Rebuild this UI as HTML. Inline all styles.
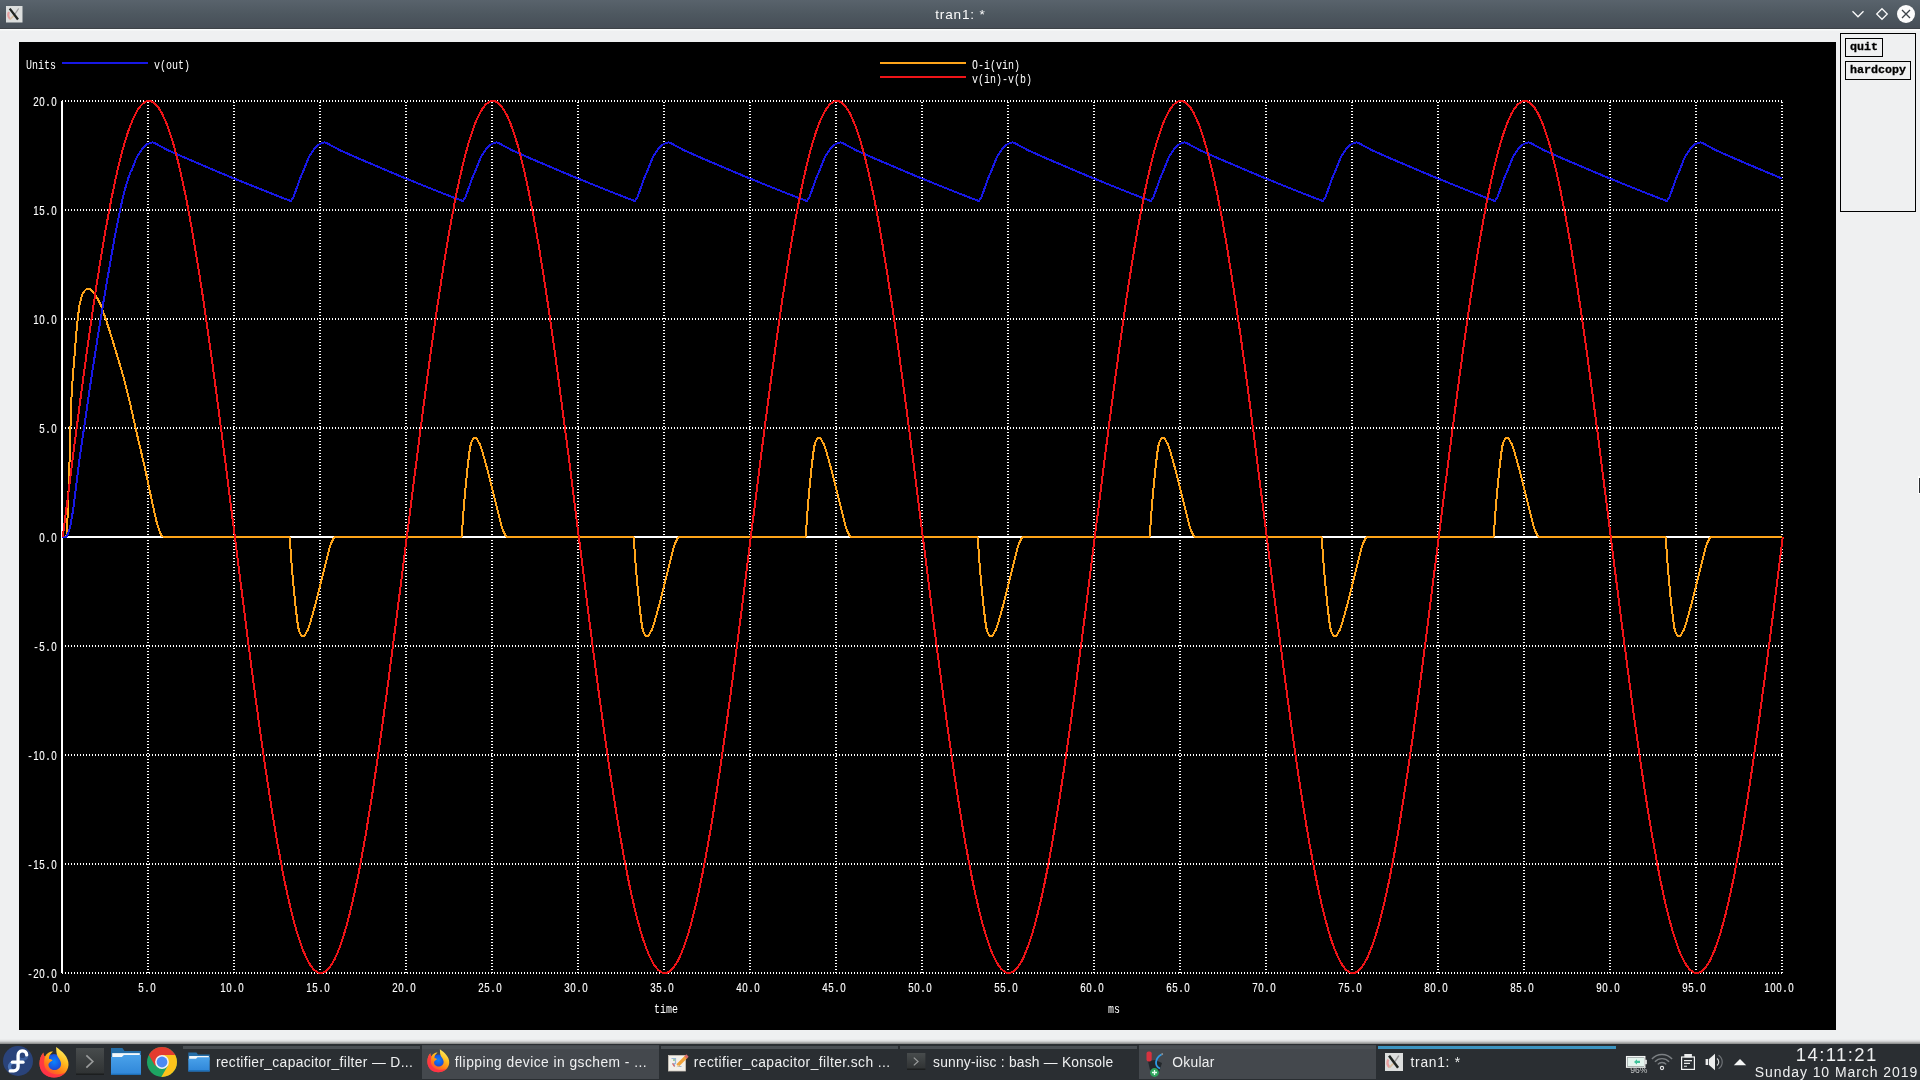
<!DOCTYPE html>
<html><head><meta charset="utf-8"><title>tran1: *</title>
<style>
html,body{margin:0;padding:0;}html{overflow:hidden;width:1920px;height:1080px;}
body{will-change:transform;width:1920px;height:1080px;overflow:hidden;background:#eff0f1;position:relative;font-family:"Liberation Sans",sans-serif;}
.abs{position:absolute;}
#titlebar{left:0;top:0;width:1920px;height:29px;background:linear-gradient(#59636c 0%,#4e5860 50%,#474e57 100%);border-bottom:1px solid #3e4348;box-sizing:border-box;}
#title{left:0;top:1px;width:1920px;height:28px;line-height:28px;text-align:center;color:#fcfcfc;font-size:13.6px;letter-spacing:0.8px;text-indent:0.8px;}
#hl{left:0;top:29px;width:1920px;height:2px;background:linear-gradient(#fbfcfc 0%,#fbfcfc 50%,#eceeee 100%);}
#plot{position:absolute;left:19px;top:42px;}
#panel{left:1840px;top:33px;width:74px;height:177px;border:1px solid #000;}
.btn{-webkit-text-stroke:0.3px #000;border:1px solid #000;font-family:"Liberation Mono",monospace;font-weight:bold;font-size:11.67px;color:#000;box-sizing:border-box;white-space:pre;}
#tshadow{left:0;top:1039px;width:1920px;height:5px;background:linear-gradient(rgba(0,0,0,0),rgba(0,0,0,0.08) 40%,rgba(0,0,0,0.45));}
#taskbar{left:0;top:1044px;width:1920px;height:36px;background:#2a2e32;}
.task{position:absolute;top:1px;height:34px;}
.task .bar{position:absolute;left:0;right:0;top:1px;height:3px;background:#4a4f54;}
.task.hl{background:#44484d;}
.task.act .bar{background:#3b93c0;}
.task .lbl{position:absolute;top:10px;font-size:13.4px;line-height:16px;color:#eff0f1;white-space:pre;transform-origin:0 0;}
#clock1{left:1752px;top:1043.6px;width:168px;text-align:center;color:#eff0f1;font-size:18.5px;line-height:22px;letter-spacing:1.4px;text-indent:1.4px;}
#clock2{left:1752px;top:1063.6px;width:168px;text-align:center;color:#eff0f1;font-size:14px;line-height:17px;letter-spacing:0.93px;text-indent:0.93px;}
</style></head><body>
<div id="titlebar" class="abs"></div>
<div id="title" class="abs">tran1: *</div>
<div id="hl" class="abs"></div>
<!-- window icon -->
<svg class="abs" style="left:6px;top:6px" width="17" height="17" viewBox="0 0 17 17">
<rect x="0" y="0" width="16.5" height="16.5" fill="#dcdedd"/>
<path d="M3 6 Q1 10 4 13" stroke="#e8a0a0" stroke-width="2.2" fill="none"/>
<path d="M4 13.5 Q7 10 9 9" stroke="#d8c0a0" stroke-width="1.5" fill="none"/>
<path d="M12.7 2.5 L9 8" stroke="#9a9a9a" stroke-width="1.3" fill="none"/>
<path d="M3.7 2.6 L12 13.5" stroke="#1e2420" stroke-width="2.3" fill="none"/>
</svg>
<!-- window buttons -->
<svg class="abs" style="left:1846px;top:2px" width="74" height="24" viewBox="1846 2 74 24">
<path d="M1852.5 11.3 L1858 16.8 L1863.5 11.3" stroke="#fcfcfc" stroke-width="1.25" fill="none"/>
<path d="M1882 8.7 L1887.3 14 L1882 19.3 L1876.7 14 Z" stroke="#fcfcfc" stroke-width="1.25" fill="none"/>
<circle cx="1906" cy="14" r="9" fill="#fcfcfc"/>
<path d="M1902 10 L1910 18 M1910 10 L1902 18" stroke="#3b4248" stroke-width="1.3" fill="none"/>
</svg>
<svg id="plot" width="1817" height="988" viewBox="19 42 1817 988">
<rect x="19" y="42" width="1817" height="988" fill="#000"/>
<g stroke="#fff" stroke-width="2" fill="none" shape-rendering="crispEdges">
<line x1="62" y1="973" x2="62" y2="101"/>
<line x1="148" y1="973" x2="148" y2="101" stroke-dasharray="1 2"/>
<line x1="234" y1="973" x2="234" y2="101" stroke-dasharray="1 2"/>
<line x1="320" y1="973" x2="320" y2="101" stroke-dasharray="1 2"/>
<line x1="406" y1="973" x2="406" y2="101" stroke-dasharray="1 2"/>
<line x1="492" y1="973" x2="492" y2="101" stroke-dasharray="1 2"/>
<line x1="578" y1="973" x2="578" y2="101" stroke-dasharray="1 2"/>
<line x1="664" y1="973" x2="664" y2="101" stroke-dasharray="1 2"/>
<line x1="750" y1="973" x2="750" y2="101" stroke-dasharray="1 2"/>
<line x1="836" y1="973" x2="836" y2="101" stroke-dasharray="1 2"/>
<line x1="922" y1="973" x2="922" y2="101" stroke-dasharray="1 2"/>
<line x1="1008" y1="973" x2="1008" y2="101" stroke-dasharray="1 2"/>
<line x1="1094" y1="973" x2="1094" y2="101" stroke-dasharray="1 2"/>
<line x1="1180" y1="973" x2="1180" y2="101" stroke-dasharray="1 2"/>
<line x1="1266" y1="973" x2="1266" y2="101" stroke-dasharray="1 2"/>
<line x1="1352" y1="973" x2="1352" y2="101" stroke-dasharray="1 2"/>
<line x1="1438" y1="973" x2="1438" y2="101" stroke-dasharray="1 2"/>
<line x1="1524" y1="973" x2="1524" y2="101" stroke-dasharray="1 2"/>
<line x1="1610" y1="973" x2="1610" y2="101" stroke-dasharray="1 2"/>
<line x1="1696" y1="973" x2="1696" y2="101" stroke-dasharray="1 2"/>
<line x1="1782" y1="973" x2="1782" y2="101" stroke-dasharray="1 2"/>
<line x1="62" y1="101" x2="1782" y2="101" stroke-dasharray="1 2"/>
<line x1="62" y1="210" x2="1782" y2="210" stroke-dasharray="1 2"/>
<line x1="62" y1="319" x2="1782" y2="319" stroke-dasharray="1 2"/>
<line x1="62" y1="428" x2="1782" y2="428" stroke-dasharray="1 2"/>
<line x1="62" y1="537" x2="1782" y2="537"/>
<line x1="62" y1="646" x2="1782" y2="646" stroke-dasharray="1 2"/>
<line x1="62" y1="755" x2="1782" y2="755" stroke-dasharray="1 2"/>
<line x1="62" y1="864" x2="1782" y2="864" stroke-dasharray="1 2"/>
<line x1="62" y1="973" x2="1782" y2="973" stroke-dasharray="1 2"/>
</g>
<g fill="none" stroke-width="2" stroke-linejoin="round" shape-rendering="crispEdges">
<polyline stroke="#ffa51a" points="62.0,537.0 65.4,537.0 65.8,536.8 66.1,536.2 66.5,535.4 66.8,533.4 67.2,526.8 69.2,471.7 69.9,450.3 70.6,422.5 71.6,394.9 72.0,388.5 72.7,378.5 74.0,362.6 76.1,335.5 77.1,324.9 78.5,312.6 79.5,305.4 80.2,301.8 81.6,296.7 82.3,294.7 83.0,293.1 84.4,291.2 85.4,290.0 86.4,289.1 87.5,288.5 88.1,288.5 89.2,288.7 90.6,289.5 92.6,291.2 93.6,292.4 95.0,294.5 98.1,299.7 99.5,302.3 100.5,304.5 106.0,319.8 109.1,329.2 111.5,336.9 120.8,367.8 122.9,375.0 125.6,385.4 128.0,394.9 130.1,403.5 136.3,431.2 144.9,468.0 151.1,497.2 155.9,519.1 157.3,524.4 158.7,528.6 160.0,532.4 161.1,534.6 161.8,535.6 162.4,536.2 163.5,536.8 164.5,537.0 289.0,537.0 289.4,537.1 289.7,537.6 290.1,538.9 290.4,547.6 290.8,553.6 292.5,574.9 294.9,600.3 296.3,612.7 297.3,621.1 298.3,627.6 299.0,630.7 300.0,633.1 301.1,635.0 302.1,636.1 302.8,636.4 303.5,636.3 304.2,635.7 305.2,634.4 306.2,632.7 308.0,629.4 310.0,623.7 315.9,602.7 323.8,570.6 327.9,554.2 330.0,546.5 331.0,543.5 332.7,539.9 333.8,538.3 334.4,537.7 335.1,537.2 335.5,537.0 461.0,537.0 461.4,536.9 461.7,536.4 462.1,535.1 462.4,526.4 462.8,520.4 464.5,499.1 466.9,473.7 468.3,461.3 469.3,452.9 470.3,446.4 471.0,443.3 472.0,440.9 473.1,439.0 474.1,437.9 474.8,437.6 475.5,437.7 476.2,438.3 477.2,439.6 478.2,441.3 480.0,444.6 482.0,450.3 487.9,471.3 495.8,503.4 499.9,519.8 502.0,527.5 503.0,530.5 504.7,534.1 505.8,535.7 506.4,536.3 507.1,536.8 507.5,537.0 633.0,537.0 633.4,537.1 633.7,537.6 634.1,538.9 634.4,547.6 634.8,553.6 636.5,574.9 638.9,600.3 640.3,612.7 641.3,621.1 642.3,627.6 643.0,630.7 644.0,633.1 645.1,635.0 646.1,636.1 646.8,636.4 647.5,636.3 648.2,635.7 649.2,634.4 650.2,632.7 652.0,629.4 654.0,623.7 659.9,602.7 667.8,570.6 671.9,554.2 674.0,546.5 675.0,543.5 676.7,539.9 677.8,538.3 678.4,537.7 679.1,537.2 679.5,537.0 805.0,537.0 805.4,536.9 805.7,536.4 806.1,535.1 806.4,526.4 806.8,520.4 808.5,499.1 810.9,473.7 812.3,461.3 813.3,452.9 814.3,446.4 815.0,443.3 816.0,440.9 817.1,439.0 818.1,437.9 818.8,437.6 819.5,437.7 820.2,438.3 821.2,439.6 822.2,441.3 824.0,444.6 826.0,450.3 831.9,471.3 839.8,503.4 843.9,519.8 846.0,527.5 847.0,530.5 848.7,534.1 849.8,535.7 850.4,536.3 851.1,536.8 851.5,537.0 977.0,537.0 977.4,537.1 977.7,537.6 978.1,538.9 978.4,547.6 978.8,553.6 980.5,574.9 982.9,600.3 984.3,612.7 985.3,621.1 986.3,627.6 987.0,630.7 988.0,633.1 989.1,635.0 990.1,636.1 990.8,636.4 991.5,636.3 992.2,635.7 993.2,634.4 994.2,632.7 996.0,629.4 998.0,623.7 1003.9,602.7 1011.8,570.6 1015.9,554.2 1018.0,546.5 1019.0,543.5 1020.7,539.9 1021.8,538.3 1022.4,537.7 1023.1,537.2 1023.5,537.0 1149.0,537.0 1149.4,536.9 1149.7,536.4 1150.1,535.1 1150.4,526.4 1150.8,520.4 1152.5,499.1 1154.9,473.7 1156.3,461.3 1157.3,452.9 1158.3,446.4 1159.0,443.3 1160.0,440.9 1161.1,439.0 1162.1,437.9 1162.8,437.6 1163.5,437.7 1164.2,438.3 1165.2,439.6 1166.2,441.3 1168.0,444.6 1170.0,450.3 1175.9,471.3 1183.8,503.4 1187.9,519.8 1190.0,527.5 1191.0,530.5 1192.7,534.1 1193.8,535.7 1194.4,536.3 1195.1,536.8 1195.5,537.0 1321.0,537.0 1321.4,537.1 1321.7,537.6 1322.1,538.9 1322.4,547.6 1322.8,553.6 1324.5,574.9 1326.9,600.3 1328.3,612.7 1329.3,621.1 1330.3,627.6 1331.0,630.7 1332.0,633.1 1333.1,635.0 1334.1,636.1 1334.8,636.4 1335.5,636.3 1336.2,635.7 1337.2,634.4 1338.2,632.7 1340.0,629.4 1342.0,623.7 1347.9,602.7 1355.8,570.6 1359.9,554.2 1362.0,546.5 1363.0,543.5 1364.7,539.9 1365.8,538.3 1366.4,537.7 1367.1,537.2 1367.5,537.0 1493.0,537.0 1493.4,536.9 1493.7,536.4 1494.1,535.1 1494.4,526.4 1494.8,520.4 1496.5,499.1 1498.9,473.7 1500.3,461.3 1501.3,452.9 1502.3,446.4 1503.0,443.3 1504.0,440.9 1505.1,439.0 1506.1,437.9 1506.8,437.6 1507.5,437.7 1508.2,438.3 1509.2,439.6 1510.2,441.3 1512.0,444.6 1514.0,450.3 1519.9,471.3 1527.8,503.4 1531.9,519.8 1534.0,527.5 1535.0,530.5 1536.7,534.1 1537.8,535.7 1538.4,536.3 1539.1,536.8 1539.5,537.0 1665.0,537.0 1665.4,537.1 1665.7,537.6 1666.1,538.9 1666.4,547.6 1666.8,553.6 1668.1,570.9 1670.5,596.9 1673.0,618.5 1674.3,627.6 1675.0,630.7 1676.0,633.1 1676.7,634.4 1677.8,635.8 1678.5,636.3 1679.1,636.4 1679.8,636.0 1680.5,635.3 1681.6,633.8 1683.3,630.8 1684.0,629.4 1686.0,623.7 1691.9,602.7 1699.8,570.6 1703.9,554.2 1706.0,546.5 1706.7,544.3 1708.0,541.2 1709.1,539.3 1710.1,538.0 1710.8,537.4 1711.5,537.0 1782.0,537.0"/>
<polyline stroke="#1818e6" points="62.0,537.0 65.8,537.0 66.1,536.9 66.8,536.2 67.8,534.1 69.2,530.5 69.9,527.9 70.9,522.7 72.7,512.5 73.4,507.8 79.5,459.3 82.0,441.9 91.2,378.8 97.8,336.4 104.3,296.8 113.9,241.5 117.4,223.3 120.1,209.8 122.2,200.3 123.6,194.5 125.0,189.3 126.7,183.4 128.4,178.0 130.8,171.5 131.1,170.7 131.5,170.5 135.6,160.1 137.0,157.0 138.4,154.6 142.2,148.9 143.2,147.6 144.2,146.5 145.9,145.0 147.3,144.2 149.0,143.4 151.8,142.5 152.8,142.4 153.8,142.7 160.4,146.1 168.0,150.3 190.7,160.2 213.4,169.9 233.3,178.2 253.3,186.3 274.9,194.9 290.8,201.0 291.4,200.3 292.1,199.3 293.9,196.1 294.5,194.4 299.7,179.6 302.8,172.2 308.0,159.2 309.0,157.0 309.7,155.7 314.5,148.4 315.5,147.2 316.9,145.9 318.3,144.8 320.0,143.8 323.1,142.7 324.5,142.4 325.2,142.5 326.2,142.9 334.8,147.4 340.0,150.3 359.6,158.9 379.5,167.4 400.8,176.4 422.2,185.1 445.2,194.3 462.8,201.0 463.4,200.3 464.1,199.3 465.9,196.1 466.5,194.4 471.7,179.6 474.8,172.2 480.0,159.2 481.0,157.0 481.7,155.7 486.5,148.4 487.5,147.2 488.9,145.9 490.3,144.8 492.0,143.8 495.1,142.7 496.5,142.4 497.2,142.5 498.2,142.9 506.8,147.4 512.0,150.3 531.6,158.9 551.5,167.4 572.8,176.4 594.2,185.1 617.2,194.3 634.8,201.0 635.4,200.3 636.1,199.3 637.9,196.1 638.5,194.4 643.7,179.6 646.8,172.2 652.0,159.2 653.0,157.0 653.7,155.7 658.5,148.4 659.5,147.2 660.9,145.9 662.3,144.8 664.0,143.8 667.1,142.7 668.5,142.4 669.2,142.5 670.2,142.9 678.8,147.4 684.0,150.3 703.6,158.9 723.5,167.4 744.8,176.4 766.2,185.1 789.2,194.3 806.8,201.0 807.4,200.3 808.1,199.3 809.9,196.1 810.5,194.4 815.7,179.6 818.8,172.2 824.0,159.2 825.0,157.0 825.7,155.7 830.5,148.4 831.5,147.2 832.9,145.9 834.3,144.8 836.0,143.8 839.1,142.7 840.5,142.4 841.2,142.5 842.2,142.9 850.8,147.4 856.0,150.3 875.6,158.9 895.5,167.4 916.8,176.4 938.2,185.1 961.2,194.3 978.8,201.0 979.4,200.3 980.1,199.3 981.9,196.1 982.5,194.4 987.7,179.6 990.8,172.2 996.0,159.2 997.0,157.0 997.7,155.7 1002.5,148.4 1003.5,147.2 1004.9,145.9 1006.3,144.8 1008.0,143.8 1011.1,142.7 1012.5,142.4 1013.2,142.5 1014.2,142.9 1022.8,147.4 1028.0,150.3 1047.6,158.9 1067.5,167.4 1088.8,176.4 1110.2,185.1 1133.2,194.3 1150.8,201.0 1151.4,200.3 1152.1,199.3 1153.9,196.1 1154.5,194.4 1159.7,179.6 1162.8,172.2 1168.0,159.2 1169.0,157.0 1169.7,155.7 1174.5,148.4 1175.5,147.2 1176.9,145.9 1178.3,144.8 1180.0,143.8 1183.1,142.7 1184.5,142.4 1185.2,142.5 1186.2,142.9 1194.8,147.4 1200.0,150.3 1219.6,158.9 1239.5,167.4 1260.8,176.4 1282.2,185.1 1305.2,194.3 1322.8,201.0 1323.4,200.3 1324.1,199.3 1325.9,196.1 1326.5,194.4 1331.7,179.6 1334.8,172.2 1340.0,159.2 1341.0,157.0 1341.7,155.7 1346.5,148.4 1347.5,147.2 1348.9,145.9 1350.3,144.8 1352.0,143.8 1355.1,142.7 1356.5,142.4 1357.2,142.5 1358.2,142.9 1366.8,147.4 1372.0,150.3 1391.6,158.9 1411.5,167.4 1432.8,176.4 1454.2,185.1 1477.2,194.3 1494.8,201.0 1495.4,200.3 1496.1,199.3 1497.9,196.1 1498.5,194.4 1503.7,179.6 1506.8,172.2 1512.0,159.2 1513.0,157.0 1513.7,155.7 1518.5,148.4 1519.5,147.2 1520.9,145.9 1522.3,144.8 1524.0,143.8 1527.1,142.7 1528.5,142.4 1529.2,142.5 1530.2,142.9 1538.8,147.4 1544.0,150.3 1563.6,158.9 1583.5,167.4 1604.8,176.4 1626.2,185.1 1649.2,194.3 1666.8,201.0 1667.4,200.3 1668.1,199.3 1669.9,196.1 1670.5,194.4 1675.7,179.6 1678.8,172.2 1683.6,160.1 1685.3,156.3 1686.7,154.1 1690.2,148.9 1691.2,147.6 1692.2,146.5 1693.9,145.0 1695.3,144.2 1697.0,143.4 1699.8,142.5 1700.8,142.4 1701.8,142.7 1708.4,146.1 1716.0,150.3 1732.1,157.4 1748.6,164.5 1765.1,171.5 1782.0,178.5"/>
<polyline stroke="#f01418" points="62.8,537.0 73.1,455.3 80.7,397.1 87.6,346.4 93.8,303.4 96.9,282.9 100.0,263.3 103.0,244.6 105.8,228.7 108.6,213.6 111.3,199.3 114.1,185.9 116.8,173.3 119.6,161.7 122.3,151.0 125.1,141.3 127.8,132.6 130.6,125.0 133.3,118.3 136.1,112.7 137.4,110.3 138.8,108.2 140.2,106.4 141.6,104.8 143.0,103.5 144.3,102.5 145.7,101.7 147.1,101.2 148.5,101.0 149.5,101.0 150.5,101.2 151.9,101.7 153.3,102.5 154.6,103.5 156.0,104.8 157.4,106.4 158.8,108.2 160.2,110.3 162.2,114.0 164.6,119.1 166.7,124.1 169.1,130.6 171.2,136.9 173.6,144.9 176.0,153.6 178.4,163.1 180.4,171.8 182.9,182.7 185.3,194.2 187.7,206.4 192.5,232.6 197.6,263.3 201.8,289.7 206.2,319.8 211.1,353.8 215.9,389.3 225.2,460.7 247.9,640.1 254.1,687.3 259.6,727.6 265.8,770.6 271.6,808.5 274.4,825.3 277.1,841.4 279.9,856.7 282.6,871.2 285.7,886.5 288.5,899.1 291.6,912.3 294.3,923.0 297.4,933.8 300.2,942.4 302.9,949.9 305.7,956.4 307.0,959.3 308.4,961.9 309.8,964.2 311.2,966.3 312.5,968.1 313.9,969.6 315.3,970.8 316.7,971.8 318.0,972.4 319.4,972.9 320.8,973.0 322.2,972.9 323.6,972.4 324.9,971.8 326.3,970.8 327.7,969.6 328.7,968.5 330.1,966.7 332.5,963.1 334.9,958.6 337.3,953.3 339.7,947.2 342.1,940.3 344.5,932.7 347.3,923.0 349.7,913.7 352.1,903.7 354.5,892.9 357.3,879.8 359.7,867.6 362.4,852.9 365.2,837.5 367.9,821.2 372.4,793.3 377.2,761.3 382.0,727.6 387.2,689.8 396.8,616.0 419.9,433.9 426.1,386.7 431.9,344.0 437.8,303.4 443.6,265.5 446.4,248.7 449.1,232.6 451.9,217.3 454.6,202.8 457.7,187.5 460.5,174.9 463.2,163.1 466.0,152.3 468.7,142.5 471.5,133.7 474.2,125.9 476.6,119.9 479.4,114.0 480.8,111.5 482.1,109.2 483.5,107.3 484.9,105.5 486.3,104.1 487.3,103.2 488.7,102.2 490.0,101.6 491.4,101.1 492.5,101.0 493.5,101.0 494.9,101.3 496.2,101.9 497.6,102.7 498.6,103.5 500.0,104.8 501.1,105.9 502.4,107.7 504.8,111.5 506.2,114.0 507.6,116.8 510.0,122.3 512.4,128.7 514.8,135.8 517.6,144.9 520.0,153.6 522.7,164.5 525.1,174.9 527.9,187.5 530.6,201.1 533.4,215.4 536.1,230.6 538.9,246.6 543.7,276.3 548.5,308.0 553.7,344.0 558.8,381.6 568.5,455.3 585.7,591.6 592.2,642.8 598.4,689.8 604.3,732.5 610.1,772.9 616.0,810.7 618.7,827.4 621.5,843.4 624.2,858.6 627.0,872.9 629.7,886.5 632.5,899.1 635.2,910.9 638.0,921.7 640.7,931.5 643.1,939.3 645.9,947.2 648.3,953.3 651.0,959.3 653.4,963.7 654.8,965.8 656.2,967.6 657.6,969.2 658.6,970.2 660.0,971.3 661.4,972.1 662.7,972.7 663.8,972.9 664.8,973.0 666.2,972.9 667.2,972.6 668.6,972.0 669.6,971.3 671.0,970.2 672.0,969.2 673.4,967.6 675.8,964.2 677.2,961.9 678.6,959.3 681.0,954.1 683.7,947.2 686.1,940.3 688.9,931.5 691.3,923.0 694.0,912.3 696.8,900.7 699.5,888.1 702.3,874.7 705.0,860.4 707.8,845.3 710.6,829.4 715.4,799.9 720.2,768.3 725.3,732.5 730.5,695.0 735.3,658.6 740.5,618.7 757.7,482.4 764.2,431.2 770.4,384.2 776.3,341.5 782.1,301.1 788.0,263.3 790.7,246.6 793.5,230.6 796.2,215.4 799.0,201.1 801.7,187.5 804.5,174.9 807.2,163.1 809.6,153.6 812.4,143.7 814.8,135.8 817.5,127.7 819.9,121.5 822.7,115.4 825.1,110.9 827.5,107.3 828.9,105.5 829.9,104.4 831.3,103.2 832.7,102.2 834.0,101.6 835.1,101.2 836.5,101.0 837.5,101.0 838.5,101.2 839.9,101.7 840.9,102.2 842.3,103.2 843.7,104.4 845.1,105.9 846.1,107.3 847.5,109.2 848.8,111.5 850.2,114.0 852.6,119.1 855.4,125.9 857.8,132.6 860.5,141.3 862.9,149.8 865.7,160.3 868.4,171.8 871.2,184.3 874.0,197.6 876.7,211.8 879.5,226.8 882.2,242.6 887.0,271.9 891.8,303.4 897.0,339.1 902.5,379.0 907.3,415.4 912.5,455.3 929.7,591.6 936.2,642.8 942.8,692.4 948.6,734.9 954.4,775.2 960.3,812.8 963.0,829.4 965.8,845.3 968.6,860.4 971.0,872.9 973.7,886.5 976.5,899.1 979.2,910.9 981.6,920.4 984.4,930.3 986.8,938.2 989.2,945.3 991.6,951.7 994.4,957.9 996.8,962.5 999.2,966.3 1000.5,968.1 1001.6,969.2 1003.0,970.5 1004.3,971.5 1005.7,972.3 1006.7,972.7 1008.1,973.0 1009.1,973.0 1010.2,972.9 1011.6,972.4 1012.6,972.0 1014.0,971.1 1015.3,969.9 1016.7,968.5 1017.7,967.2 1019.1,965.3 1020.5,963.1 1021.9,960.6 1024.3,955.7 1027.0,949.0 1029.4,942.4 1032.2,933.8 1034.6,925.5 1037.4,915.0 1040.1,903.7 1042.9,891.3 1045.6,878.1 1048.4,864.0 1051.1,849.1 1054.2,831.4 1059.0,802.1 1063.8,770.6 1069.0,734.9 1074.5,695.0 1079.3,658.6 1084.5,618.7 1101.7,482.4 1108.2,431.2 1114.8,381.6 1120.6,339.1 1126.4,298.8 1132.3,261.2 1135.0,244.6 1137.8,228.7 1140.6,213.6 1143.0,201.1 1145.7,187.5 1148.5,174.9 1151.2,163.1 1153.6,153.6 1156.4,143.7 1158.8,135.8 1161.2,128.7 1163.6,122.3 1166.4,116.1 1168.8,111.5 1171.2,107.7 1172.5,105.9 1173.6,104.8 1175.0,103.5 1176.0,102.7 1177.4,101.9 1178.4,101.4 1179.8,101.1 1180.8,101.0 1181.8,101.1 1183.2,101.4 1184.2,101.9 1185.6,102.7 1187.0,103.8 1188.4,105.2 1189.4,106.4 1190.8,108.2 1192.2,110.3 1193.5,112.7 1195.9,117.6 1198.7,124.1 1201.1,130.6 1203.8,139.1 1206.3,147.3 1209.0,157.6 1211.8,168.9 1214.5,181.1 1217.3,194.2 1220.0,208.1 1222.8,222.9 1225.9,240.5 1230.7,269.8 1235.5,301.1 1240.7,336.6 1246.2,376.5 1251.0,412.7 1256.1,452.6 1274.0,594.4 1280.6,645.4 1286.8,692.4 1292.6,734.9 1298.4,775.2 1304.3,812.8 1307.0,829.4 1309.8,845.3 1312.6,860.4 1315.0,872.9 1317.7,886.5 1320.1,897.6 1322.9,909.5 1325.3,919.1 1328.0,929.1 1330.4,937.1 1332.8,944.4 1335.3,950.8 1338.0,957.2 1340.4,961.9 1342.8,965.8 1344.2,967.6 1345.2,968.8 1346.6,970.2 1347.6,971.1 1349.0,972.0 1350.0,972.4 1351.4,972.9 1352.5,973.0 1353.5,973.0 1354.9,972.7 1355.9,972.3 1357.3,971.5 1358.6,970.5 1360.0,969.2 1361.1,968.1 1362.4,966.3 1363.8,964.2 1365.2,961.9 1367.6,957.2 1370.3,950.8 1373.1,943.4 1375.8,934.9 1378.3,926.7 1381.0,916.4 1383.8,905.1 1386.5,892.9 1389.3,879.8 1392.0,865.9 1394.8,851.1 1397.9,833.5 1402.7,804.2 1407.5,772.9 1412.7,737.4 1418.2,697.5 1423.0,661.3 1428.1,621.4 1446.0,479.6 1452.6,428.6 1458.8,381.6 1464.6,339.1 1470.4,298.8 1476.0,263.3 1478.7,246.6 1481.5,230.6 1484.2,215.4 1486.6,202.8 1489.4,189.2 1491.8,177.9 1494.2,167.4 1496.6,157.6 1499.0,148.5 1501.4,140.2 1503.8,132.6 1506.2,125.9 1508.6,119.9 1511.0,114.7 1513.4,110.3 1515.5,107.3 1516.9,105.5 1517.9,104.4 1519.3,103.2 1520.3,102.5 1521.7,101.7 1522.7,101.3 1523.8,101.1 1524.8,101.0 1525.8,101.1 1527.2,101.4 1528.2,101.9 1529.6,102.7 1530.6,103.5 1532.0,104.8 1533.4,106.4 1534.8,108.2 1537.2,112.1 1539.6,116.8 1542.0,122.3 1544.8,129.6 1547.2,136.9 1549.6,144.9 1552.0,153.6 1554.7,164.5 1557.1,174.9 1559.9,187.5 1562.6,201.1 1565.4,215.4 1570.6,244.6 1575.7,276.3 1581.2,312.7 1586.7,351.4 1592.2,391.9 1598.1,436.6 1620.4,613.3 1629.4,682.1 1634.2,717.7 1639.0,751.8 1643.5,782.1 1647.6,808.5 1652.8,839.4 1657.6,865.9 1660.0,878.1 1662.4,889.7 1664.8,900.7 1666.9,909.5 1669.3,919.1 1671.7,927.9 1674.1,936.0 1676.2,942.4 1678.6,949.0 1680.6,954.1 1683.0,959.3 1685.1,963.1 1686.5,965.3 1687.9,967.2 1689.2,968.8 1690.6,970.2 1692.0,971.3 1693.4,972.1 1694.7,972.7 1695.8,972.9 1696.8,973.0 1698.2,972.9 1699.6,972.4 1700.9,971.8 1702.3,970.8 1703.7,969.6 1705.1,968.1 1706.4,966.3 1707.8,964.2 1709.2,961.9 1710.6,959.3 1711.9,956.4 1714.7,949.9 1717.4,942.4 1720.2,933.8 1722.9,924.2 1725.7,913.7 1728.4,902.2 1731.2,889.7 1734.0,876.4 1736.7,862.2 1739.8,845.3 1742.6,829.4 1745.6,810.7 1748.7,791.1 1751.8,770.6 1758.0,727.6 1764.9,676.9 1772.5,618.7 1782.8,537.0"/>
<line x1="62" y1="63" x2="148" y2="63" stroke="#1818e6"/>
<line x1="880" y1="63" x2="966" y2="63" stroke="#ffa51a"/>
<line x1="880" y1="77" x2="966" y2="77" stroke="#f01418"/>
</g>
<style>#plot .m{font-family:"Liberation Mono",monospace;font-size:13px}#plot .d{font-family:"Liberation Sans",sans-serif;font-size:12.7px;stroke:#fff;stroke-width:0.12px}</style>
<g fill="#fff">
<text transform="translate(26,69) scale(0.7691,1)" text-anchor="middle"><tspan class="m" x="3.90">U</tspan><tspan class="m" x="11.70">n</tspan><tspan class="m" x="19.50">i</tspan><tspan class="m" x="27.30">t</tspan><tspan class="m" x="35.11">s</tspan></text>
<text transform="translate(154,69) scale(0.7691,1)" text-anchor="middle"><tspan class="m" x="3.90">v</tspan><tspan class="m" x="11.70">(</tspan><tspan class="m" x="19.50">o</tspan><tspan class="m" x="27.30">u</tspan><tspan class="m" x="35.11">t</tspan><tspan class="m" x="42.91">)</tspan></text>
<text transform="translate(972,69) scale(0.7691,1)" text-anchor="middle"><tspan class="d" x="3.90">0</tspan><tspan class="m" x="11.70">-</tspan><tspan class="m" x="19.50">i</tspan><tspan class="m" x="27.30">(</tspan><tspan class="m" x="35.11">v</tspan><tspan class="m" x="42.91">i</tspan><tspan class="m" x="50.71">n</tspan><tspan class="m" x="58.51">)</tspan></text>
<text transform="translate(972,83) scale(0.7691,1)" text-anchor="middle"><tspan class="m" x="3.90">v</tspan><tspan class="m" x="11.70">(</tspan><tspan class="m" x="19.50">i</tspan><tspan class="m" x="27.30">n</tspan><tspan class="m" x="35.11">)</tspan><tspan class="m" x="42.91">-</tspan><tspan class="m" x="50.71">v</tspan><tspan class="m" x="58.51">(</tspan><tspan class="m" x="66.31">b</tspan><tspan class="m" x="74.11">)</tspan></text>
<text transform="translate(33,106) scale(0.7691,1)" text-anchor="middle"><tspan class="d" x="3.90">2</tspan><tspan class="d" x="11.70">0</tspan><tspan class="m" x="19.50">.</tspan><tspan class="d" x="27.30">0</tspan></text>
<text transform="translate(33,215) scale(0.7691,1)" text-anchor="middle"><tspan class="d" x="3.90">1</tspan><tspan class="d" x="11.70">5</tspan><tspan class="m" x="19.50">.</tspan><tspan class="d" x="27.30">0</tspan></text>
<text transform="translate(33,324) scale(0.7691,1)" text-anchor="middle"><tspan class="d" x="3.90">1</tspan><tspan class="d" x="11.70">0</tspan><tspan class="m" x="19.50">.</tspan><tspan class="d" x="27.30">0</tspan></text>
<text transform="translate(39,433) scale(0.7691,1)" text-anchor="middle"><tspan class="d" x="3.90">5</tspan><tspan class="m" x="11.70">.</tspan><tspan class="d" x="19.50">0</tspan></text>
<text transform="translate(39,542) scale(0.7691,1)" text-anchor="middle"><tspan class="d" x="3.90">0</tspan><tspan class="m" x="11.70">.</tspan><tspan class="d" x="19.50">0</tspan></text>
<text transform="translate(33,651) scale(0.7691,1)" text-anchor="middle"><tspan class="m" x="3.90">-</tspan><tspan class="d" x="11.70">5</tspan><tspan class="m" x="19.50">.</tspan><tspan class="d" x="27.30">0</tspan></text>
<text transform="translate(27,760) scale(0.7691,1)" text-anchor="middle"><tspan class="m" x="3.90">-</tspan><tspan class="d" x="11.70">1</tspan><tspan class="d" x="19.50">0</tspan><tspan class="m" x="27.30">.</tspan><tspan class="d" x="35.11">0</tspan></text>
<text transform="translate(27,869) scale(0.7691,1)" text-anchor="middle"><tspan class="m" x="3.90">-</tspan><tspan class="d" x="11.70">1</tspan><tspan class="d" x="19.50">5</tspan><tspan class="m" x="27.30">.</tspan><tspan class="d" x="35.11">0</tspan></text>
<text transform="translate(27,978) scale(0.7691,1)" text-anchor="middle"><tspan class="m" x="3.90">-</tspan><tspan class="d" x="11.70">2</tspan><tspan class="d" x="19.50">0</tspan><tspan class="m" x="27.30">.</tspan><tspan class="d" x="35.11">0</tspan></text>
<text transform="translate(52,992) scale(0.7691,1)" text-anchor="middle"><tspan class="d" x="3.90">0</tspan><tspan class="m" x="11.70">.</tspan><tspan class="d" x="19.50">0</tspan></text>
<text transform="translate(138,992) scale(0.7691,1)" text-anchor="middle"><tspan class="d" x="3.90">5</tspan><tspan class="m" x="11.70">.</tspan><tspan class="d" x="19.50">0</tspan></text>
<text transform="translate(220,992) scale(0.7691,1)" text-anchor="middle"><tspan class="d" x="3.90">1</tspan><tspan class="d" x="11.70">0</tspan><tspan class="m" x="19.50">.</tspan><tspan class="d" x="27.30">0</tspan></text>
<text transform="translate(306,992) scale(0.7691,1)" text-anchor="middle"><tspan class="d" x="3.90">1</tspan><tspan class="d" x="11.70">5</tspan><tspan class="m" x="19.50">.</tspan><tspan class="d" x="27.30">0</tspan></text>
<text transform="translate(392,992) scale(0.7691,1)" text-anchor="middle"><tspan class="d" x="3.90">2</tspan><tspan class="d" x="11.70">0</tspan><tspan class="m" x="19.50">.</tspan><tspan class="d" x="27.30">0</tspan></text>
<text transform="translate(478,992) scale(0.7691,1)" text-anchor="middle"><tspan class="d" x="3.90">2</tspan><tspan class="d" x="11.70">5</tspan><tspan class="m" x="19.50">.</tspan><tspan class="d" x="27.30">0</tspan></text>
<text transform="translate(564,992) scale(0.7691,1)" text-anchor="middle"><tspan class="d" x="3.90">3</tspan><tspan class="d" x="11.70">0</tspan><tspan class="m" x="19.50">.</tspan><tspan class="d" x="27.30">0</tspan></text>
<text transform="translate(650,992) scale(0.7691,1)" text-anchor="middle"><tspan class="d" x="3.90">3</tspan><tspan class="d" x="11.70">5</tspan><tspan class="m" x="19.50">.</tspan><tspan class="d" x="27.30">0</tspan></text>
<text transform="translate(736,992) scale(0.7691,1)" text-anchor="middle"><tspan class="d" x="3.90">4</tspan><tspan class="d" x="11.70">0</tspan><tspan class="m" x="19.50">.</tspan><tspan class="d" x="27.30">0</tspan></text>
<text transform="translate(822,992) scale(0.7691,1)" text-anchor="middle"><tspan class="d" x="3.90">4</tspan><tspan class="d" x="11.70">5</tspan><tspan class="m" x="19.50">.</tspan><tspan class="d" x="27.30">0</tspan></text>
<text transform="translate(908,992) scale(0.7691,1)" text-anchor="middle"><tspan class="d" x="3.90">5</tspan><tspan class="d" x="11.70">0</tspan><tspan class="m" x="19.50">.</tspan><tspan class="d" x="27.30">0</tspan></text>
<text transform="translate(994,992) scale(0.7691,1)" text-anchor="middle"><tspan class="d" x="3.90">5</tspan><tspan class="d" x="11.70">5</tspan><tspan class="m" x="19.50">.</tspan><tspan class="d" x="27.30">0</tspan></text>
<text transform="translate(1080,992) scale(0.7691,1)" text-anchor="middle"><tspan class="d" x="3.90">6</tspan><tspan class="d" x="11.70">0</tspan><tspan class="m" x="19.50">.</tspan><tspan class="d" x="27.30">0</tspan></text>
<text transform="translate(1166,992) scale(0.7691,1)" text-anchor="middle"><tspan class="d" x="3.90">6</tspan><tspan class="d" x="11.70">5</tspan><tspan class="m" x="19.50">.</tspan><tspan class="d" x="27.30">0</tspan></text>
<text transform="translate(1252,992) scale(0.7691,1)" text-anchor="middle"><tspan class="d" x="3.90">7</tspan><tspan class="d" x="11.70">0</tspan><tspan class="m" x="19.50">.</tspan><tspan class="d" x="27.30">0</tspan></text>
<text transform="translate(1338,992) scale(0.7691,1)" text-anchor="middle"><tspan class="d" x="3.90">7</tspan><tspan class="d" x="11.70">5</tspan><tspan class="m" x="19.50">.</tspan><tspan class="d" x="27.30">0</tspan></text>
<text transform="translate(1424,992) scale(0.7691,1)" text-anchor="middle"><tspan class="d" x="3.90">8</tspan><tspan class="d" x="11.70">0</tspan><tspan class="m" x="19.50">.</tspan><tspan class="d" x="27.30">0</tspan></text>
<text transform="translate(1510,992) scale(0.7691,1)" text-anchor="middle"><tspan class="d" x="3.90">8</tspan><tspan class="d" x="11.70">5</tspan><tspan class="m" x="19.50">.</tspan><tspan class="d" x="27.30">0</tspan></text>
<text transform="translate(1596,992) scale(0.7691,1)" text-anchor="middle"><tspan class="d" x="3.90">9</tspan><tspan class="d" x="11.70">0</tspan><tspan class="m" x="19.50">.</tspan><tspan class="d" x="27.30">0</tspan></text>
<text transform="translate(1682,992) scale(0.7691,1)" text-anchor="middle"><tspan class="d" x="3.90">9</tspan><tspan class="d" x="11.70">5</tspan><tspan class="m" x="19.50">.</tspan><tspan class="d" x="27.30">0</tspan></text>
<text transform="translate(1764,992) scale(0.7691,1)" text-anchor="middle"><tspan class="d" x="3.90">1</tspan><tspan class="d" x="11.70">0</tspan><tspan class="d" x="19.50">0</tspan><tspan class="m" x="27.30">.</tspan><tspan class="d" x="35.11">0</tspan></text>
<text transform="translate(654,1013) scale(0.7691,1)" text-anchor="middle"><tspan class="m" x="3.90">t</tspan><tspan class="m" x="11.70">i</tspan><tspan class="m" x="19.50">m</tspan><tspan class="m" x="27.30">e</tspan></text>
<text transform="translate(1108,1013) scale(0.7691,1)" text-anchor="middle"><tspan class="m" x="3.90">m</tspan><tspan class="m" x="11.70">s</tspan></text>
</g></svg>
<div id="panel" class="abs"></div>
<div class="btn abs" style="left:1845px;top:38px;width:38px;height:19px;line-height:17px;padding-left:4px;">quit</div>
<div class="btn abs" style="left:1845px;top:61px;width:66px;height:19px;line-height:17px;padding-left:4px;">hardcopy</div>
<div class="abs" style="left:1918px;top:476px;width:2px;height:18px;background:#fdfdfd;"></div><div class="abs" style="left:1919px;top:477.5px;width:1px;height:15px;background:#2c2f33;"></div>
<div id="tshadow" class="abs"></div>
<div id="taskbar" class="abs">
<div class="task " style="left:183px;width:236.5px"><div class="bar"></div><div class="lbl" style="left:32.9px;font-size:13.8px;letter-spacing:0.357px">rectifier_capacitor_filter — D...</div></div>
<div class="task hl" style="left:422px;width:237px"><div class="bar"></div><div class="lbl" style="left:32.8px;font-size:13.8px;letter-spacing:0.462px">flipping device in gschem - ...</div></div>
<div class="task " style="left:661px;width:236.5px"><div class="bar"></div><div class="lbl" style="left:32.8px;font-size:13.8px;letter-spacing:0.418px">rectifier_capacitor_filter.sch ...</div></div>
<div class="task " style="left:900px;width:237px"><div class="bar"></div><div class="lbl" style="left:33px;font-size:13.8px;letter-spacing:0.235px">sunny-iisc : bash — Konsole</div></div>
<div class="task hl" style="left:1139px;width:236.7px"><div class="bar"></div><div class="lbl" style="left:33.2px;font-size:13.8px;letter-spacing:0.314px">Okular</div></div>
<div class="task act" style="left:1378px;width:237.5px"><div class="bar"></div><div class="lbl" style="left:32.5px;font-size:13.8px;letter-spacing:0.732px">tran1: *</div></div>
</div>
<svg class="abs" style="left:0;top:1044px" width="1920" height="36" viewBox="0 1044 1920 36">
<g transform="translate(18,1061) scale(1.0)">
<circle r="15" fill="#2a437a"/>
<circle cx="-4.2" cy="5.6" r="4.3" fill="none" stroke="#4b74b8" stroke-width="3.3"/>
<circle cx="4.4" cy="-5.6" r="4.3" fill="none" stroke="#3c5f9f" stroke-width="3.3"/>
<path d="M8.7 -6.2 a4.3 4.3 0 0 0 -8.6 0.6 v11.2 a4.3 4.3 0 0 1 -4.3 4.3 h-3.6" fill="none" stroke="#fff" stroke-width="3.3" stroke-linecap="round"/>
<path d="M-5.6 1.2 h10.6" stroke="#fff" stroke-width="3.3" stroke-linecap="round"/>
</g>
<g transform="translate(54,1062) scale(1.0)">
<defs><linearGradient id="ffaa" x1="0.8" y1="0" x2="0.2" y2="1"><stop offset="0" stop-color="#fff36b"/><stop offset="0.35" stop-color="#ffbd1f"/><stop offset="0.65" stop-color="#ff7a16"/><stop offset="1" stop-color="#ff2a4f"/></linearGradient>
<radialGradient id="ffba" cx="0.5" cy="0.4" r="0.6"><stop offset="0" stop-color="#0a84ff"/><stop offset="0.7" stop-color="#1d4bd6"/><stop offset="1" stop-color="#3a1f9a"/></radialGradient></defs>
<circle cx="0" cy="1.5" r="9.5" fill="url(#ffba)"/>
<path d="M2 -15 C8 -11 15 -5 14.5 3 C14 11 7 15.5 0 15.5 C-8 15.5 -14.5 10 -14.5 1.5 C-14.5 -3 -13 -7 -10.5 -9.5 C-10.8 -7.5 -10 -6 -9 -5.5 C-7 -9.5 -3 -11 -1 -10.5 C-4 -8 -5.5 -5.5 -5 -3 C-3.5 -3 -2 -2.5 -1.5 -1.5 C-3 -0.5 -5 0.5 -5.5 2 C-6 6 -2 8.5 1.5 8 C5.5 7.5 7.5 4 7 1 C6.5 -2.5 4 -4 3 -7 C2 -10 2.5 -12.5 2 -15 Z" fill="url(#ffaa)"/>
<path d="M-14.5 1.5 C-14.5 10 -8 15.5 0 15.5 C5 15.5 9 13.5 11.5 10.5 C6 13.5 -2 13 -6.5 9 C-10.5 5.5 -10.5 0 -9 -5.5 C-10 -6 -10.8 -7.5 -10.5 -9.5 C-13 -7 -14.5 -3 -14.5 1.5 Z" fill="#ff3047" opacity="0.85"/>
</g>
<g><defs><linearGradient id="kg76" x1="0" y1="0" x2="0" y2="1"><stop offset="0" stop-color="#484c4d"/><stop offset="1" stop-color="#2e3132"/></linearGradient></defs>
<rect x="76" y="1048" width="28" height="27" fill="url(#kg76)"/><rect x="76" y="1073.5" width="28" height="1.5" fill="#1c1e1f"/>
<path d="M86.36 1055.29 L92.8 1061.5 L86.36 1067.71" fill="none" stroke="#9a9c9c" stroke-width="1.68"/></g>
<g><defs><linearGradient id="fga" x1="0" y1="0" x2="0" y2="1"><stop offset="0" stop-color="#4aa2ea"/><stop offset="1" stop-color="#2f86d8"/></linearGradient></defs>
<path d="M111 1048 h11.4 l2.1 2.97 h16.5 v8.1 h-30 Z" fill="#256ea8"/>
<rect x="112.2" y="1053.13" width="27.6" height="5.4" fill="#f4f8fb"/>
<path d="M111 1056.91 h10.799999999999999 l2.1 -1.8900000000000001 h17.099999999999998 v19.98 h-30 Z" fill="url(#fga)"/>
<rect x="111" y="1073.7" width="30" height="1.3" fill="#1f6fb5"/></g>
<g transform="translate(162,1062) scale(1.0)"><clipPath id="chc162"><circle r="15"/></clipPath>
<g clip-path="url(#chc162)"><circle r="15.5" fill="#1da462"/>
<path d="M0 -6.9 L40 -6.9 L40 -40 L-26.84 -40 L-26.84 -30.69 L-6.84 3.95 Z" fill="#fcc31b" transform="rotate(120)"/>
<path d="M0 -6.9 L40 -6.9 L40 -40 L-26.84 -40 L-26.84 -30.69 L-6.84 3.95 Z" fill="#e33b2e"/></g>
<circle r="6.9" fill="#f1f1f1"/><circle r="5.4" fill="#4a8af4"/></g>
<g><defs><linearGradient id="fgb" x1="0" y1="0" x2="0" y2="1"><stop offset="0" stop-color="#4aa2ea"/><stop offset="1" stop-color="#2f86d8"/></linearGradient></defs>
<path d="M188.3 1052.4 h8.132 l1.498 2.09 h11.77 v5.7 h-21.4 Z" fill="#256ea8"/>
<rect x="189.156" y="1056.01" width="19.688" height="3.8000000000000003" fill="#f4f8fb"/>
<path d="M188.3 1058.67 h7.703999999999999 l1.498 -1.33 h12.197999999999999 v14.06 h-21.4 Z" fill="url(#fgb)"/>
<rect x="188.3" y="1070.1000000000001" width="21.4" height="1.3" fill="#1f6fb5"/></g>
<g transform="translate(438.3,1060.5) scale(0.7533333333333334)">
<defs><linearGradient id="ffab" x1="0.8" y1="0" x2="0.2" y2="1"><stop offset="0" stop-color="#fff36b"/><stop offset="0.35" stop-color="#ffbd1f"/><stop offset="0.65" stop-color="#ff7a16"/><stop offset="1" stop-color="#ff2a4f"/></linearGradient>
<radialGradient id="ffbb" cx="0.5" cy="0.4" r="0.6"><stop offset="0" stop-color="#0a84ff"/><stop offset="0.7" stop-color="#1d4bd6"/><stop offset="1" stop-color="#3a1f9a"/></radialGradient></defs>
<circle cx="0" cy="1.5" r="9.5" fill="url(#ffbb)"/>
<path d="M2 -15 C8 -11 15 -5 14.5 3 C14 11 7 15.5 0 15.5 C-8 15.5 -14.5 10 -14.5 1.5 C-14.5 -3 -13 -7 -10.5 -9.5 C-10.8 -7.5 -10 -6 -9 -5.5 C-7 -9.5 -3 -11 -1 -10.5 C-4 -8 -5.5 -5.5 -5 -3 C-3.5 -3 -2 -2.5 -1.5 -1.5 C-3 -0.5 -5 0.5 -5.5 2 C-6 6 -2 8.5 1.5 8 C5.5 7.5 7.5 4 7 1 C6.5 -2.5 4 -4 3 -7 C2 -10 2.5 -12.5 2 -15 Z" fill="url(#ffab)"/>
<path d="M-14.5 1.5 C-14.5 10 -8 15.5 0 15.5 C5 15.5 9 13.5 11.5 10.5 C6 13.5 -2 13 -6.5 9 C-10.5 5.5 -10.5 0 -9 -5.5 C-10 -6 -10.8 -7.5 -10.5 -9.5 C-13 -7 -14.5 -3 -14.5 1.5 Z" fill="#ff3047" opacity="0.85"/>
</g>
<g transform="translate(668.5,1054.5)"><rect x="0" y="1" width="17" height="15.5" fill="#f3f0ea" stroke="#cfc9bd" stroke-width="0.8"/>
<path d="M3 4 h4 v5 h-3 M9 12 h4 M6 12 v-3" stroke="#9bb6d8" stroke-width="1.2" fill="none"/>
<path d="M4 9 l2 3" stroke="#d65a5a" stroke-width="1.2"/><path d="M5 5 l1 1" stroke="#62b35f" stroke-width="1.6"/>
<path d="M18 2 L9 11" stroke="#f0a23a" stroke-width="3.2"/><path d="M9.8 10.2 L7.5 13 L10.8 11.8 Z" fill="#e8d5b0"/><path d="M19 1 L17 3" stroke="#d86a6a" stroke-width="3.2"/></g>
<g><defs><linearGradient id="kg907" x1="0" y1="0" x2="0" y2="1"><stop offset="0" stop-color="#484c4d"/><stop offset="1" stop-color="#2e3132"/></linearGradient></defs>
<rect x="907" y="1053" width="18.4" height="17" fill="url(#kg907)"/><rect x="907" y="1068.5" width="18.4" height="1.5" fill="#1c1e1f"/>
<path d="M913.808 1057.59 L918.04 1061.5 L913.808 1065.41" fill="none" stroke="#9a9c9c" stroke-width="1.20"/></g>
<g transform="translate(1145,1051)">
<path d="M3 10 L5 19 L14 21 L17 12 L10 9 Z" fill="#23272b"/>
<rect x="1.5" y="0.5" width="5.2" height="10" rx="2" fill="#d8323f"/>
<path d="M16.5 3.5 C10 7 9 15 15 17.5" fill="none" stroke="#2f9be6" stroke-width="1.8"/>
<path d="M16.5 3.5 l1.3 -0.8" stroke="#9aa0a6" stroke-width="1.5"/>
<circle cx="9.5" cy="21.5" r="4.4" fill="#2fa45c"/><path d="M7 21.5 h5 M9.5 19 v5" stroke="#eafff0" stroke-width="1.3"/></g>
<g transform="translate(1385,1053) scale(1.0909090909090908)"><rect x="0" y="0" width="16.5" height="16.5" fill="#dcdedd"/>
<path d="M3 6 Q1 10 4 13" stroke="#e8a0a0" stroke-width="2.2" fill="none"/>
<path d="M4 13.5 Q7 10 9 9" stroke="#d8c0a0" stroke-width="1.5" fill="none"/>
<path d="M12.7 2.5 L9 8" stroke="#9a9a9a" stroke-width="1.3" fill="none"/>
<path d="M3.7 2.6 L12 13.5" stroke="#1e2420" stroke-width="2.3" fill="none"/></g>
<g fill="none">
<rect x="1626.6" y="1056.6" width="18.2" height="10.6" stroke="#f4f5f5" stroke-width="1.3"/>
<rect x="1645.2" y="1059.8" width="1.6" height="4.4" fill="#f4f5f5"/>
<rect x="1627.4" y="1057.4" width="16.6" height="9" fill="#e4f4ee"/>
<path d="M1634 1061.9 l3 -2.6 v1.5 h3 v2.2 h-3 v1.5 Z" fill="#3fc29a"/>
<g stroke="#7c8084" stroke-width="1.4">
<path d="M1651.9 1059 A13.6 13.6 0 0 1 1672.1 1059"/>
<path d="M1654.9 1061.8 A9.5 9.5 0 0 1 1669.1 1061.8"/>
<path d="M1657.8 1064.4 A5.6 5.6 0 0 1 1666.2 1064.4"/></g>
<circle cx="1662" cy="1068" r="1.6" stroke="#e6e7e8" stroke-width="1.1"/>
<rect x="1681.6" y="1057" width="12.8" height="12.4" stroke="#f4f5f5" stroke-width="1.2"/>
<rect x="1684.3" y="1054" width="7.6" height="3.4" fill="#eceded"/>
<path d="M1684 1060.6 h8 M1684 1063.4 h6 M1684 1066.2 h3" stroke="#eceded" stroke-width="1.1"/>
<rect x="1705.6" y="1059" width="2.6" height="6" fill="#eceded"/>
<path d="M1709 1059 L1715 1053.8 V1070.2 L1709 1065 Z" fill="#eceded"/>
<path d="M1717 1058.6 A4.2 4.2 0 0 1 1717 1065.4" stroke="#d0d2d3" stroke-width="1.2"/>
<path d="M1718.6 1055.2 A8.2 8.2 0 0 1 1718.6 1068.8" stroke="#6e7276" stroke-width="1.2"/>
<path d="M1733.8 1065.3 L1740 1059 L1746.2 1065.3 Z" fill="#f4f5f5"/>
</g>
<text x="1630.2" y="1072.6" font-family="'Liberation Sans',sans-serif" font-size="8.6px" fill="#c6c8c9">96%</text>
</svg>
<div id="clock1" class="abs">14:11:21</div>
<div id="clock2" class="abs">Sunday 10 March 2019</div>
</body></html>
